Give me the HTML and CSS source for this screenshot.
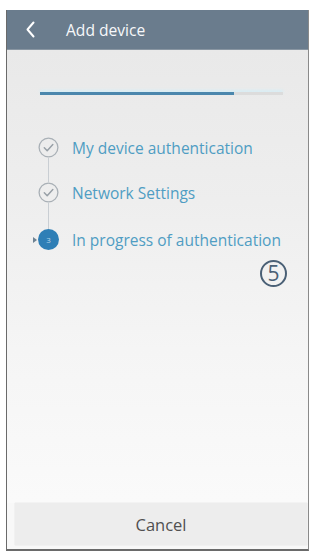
FILE: index.html
```html
<!DOCTYPE html>
<html>
<head>
<meta charset="utf-8">
<link rel="stylesheet" href="styles.css">
</head>
<body>
<div class="phone">
  <div class="header">
    <svg class="back" width="11" height="17" viewBox="0 0 11 17"><path d="M8.5 1.5 L2.5 8.5 L8.5 15.5" fill="none" stroke="#ffffff" stroke-width="2" stroke-linecap="round" stroke-linejoin="round"/></svg>
    <span class="title">Add device</span>
  </div>
  <div class="content">
    <div class="progress"><div class="fill" style="width:80%"></div></div>
    <ul class="steps">
      <li class="step done">
        <span class="marker"></span>
        <span class="circle"><svg width="21" height="21" viewBox="0 0 21 21"><circle cx="10.5" cy="10.5" r="9.4" fill="none" stroke="#a9b0b6" stroke-width="1.3"/><path d="M6.3 10.8 L9.2 13.7 L14.8 7.6" fill="none" stroke="#98a0a7" stroke-width="1.5" stroke-linecap="round" stroke-linejoin="round"/></svg></span>
        <span class="label">My device authentication</span>
      </li>
      <li class="step done">
        <span class="marker"></span>
        <span class="circle"><svg width="21" height="21" viewBox="0 0 21 21"><circle cx="10.5" cy="10.5" r="9.4" fill="none" stroke="#a9b0b6" stroke-width="1.3"/><path d="M6.3 10.8 L9.2 13.7 L14.8 7.6" fill="none" stroke="#98a0a7" stroke-width="1.5" stroke-linecap="round" stroke-linejoin="round"/></svg></span>
        <span class="label">Network Settings</span>
      </li>
      <li class="step current">
        <span class="marker"></span>
        <span class="circle num">3</span>
        <span class="label">In progress of authentication</span>
      </li>
    </ul>
    <div class="stepno">5</div>
  </div>
  <div class="footer">
    <button class="cancel">Cancel</button>
  </div>
</div>
</body>
</html>
```
FILE: styles.css
```css
html, body {
  margin: 0;
  padding: 0;
  background: #ffffff;
}
body {
  font-family: "Open Sans", "Liberation Sans", sans-serif;
}
.phone {
  margin: 10px 0 0 6px;
  width: 301px;
  height: 539px;
  border-left: 1px solid #6a6a6a;
  border-right: 1px solid #8a8a8a;
  border-bottom: 2px solid #6a6a6a;
  display: flex;
  flex-direction: column;
  background: #f8f8f8;
}
.header {
  height: 39px;
  background: #6a7c8d;
  display: flex;
  align-items: center;
  border-bottom: 1px solid #8996a2;
}
.back {
  margin-left: 18px;
}
.title {
  margin-left: 30px;
  color: #f7f8fa;
  font-size: 15.6px;
}
.content {
  flex: 1;
  background: linear-gradient(#e9e9e9 0px, #eeeeee 150px, #f5f5f5 300px, #fafafa 450px);
  display: flex;
  flex-direction: column;
}
.progress {
  margin: 42px 25px 0 33px;
  height: 3px;
  background: #dcdcdc;
  box-shadow: 0 -2px 3px #d6edf5;
}
.fill {
  height: 100%;
  background: #4b87ad;
}
.steps {
  list-style: none;
  margin: 42px 0 0 0;
  padding: 0;
  display: flex;
  flex-direction: column;
  gap: 24px;
}
.step {
  display: flex;
  align-items: center;
  height: 21px;
  position: relative;
}
.step.current {
  margin-top: 2px;
}
.step + .step::before {
  content: "";
  position: absolute;
  left: 41px;
  top: -24px;
  width: 1px;
  height: 24px;
  background: #c9ced3;
}
.step.current::before {
  top: -26px;
  height: 26px;
}
.marker {
  width: 31px;
  display: flex;
  justify-content: flex-end;
}
.current .marker::after {
  content: "";
  border-left: 4px solid #6d8293;
  border-top: 3px solid transparent;
  border-bottom: 3px solid transparent;
  margin-right: 1px;
}
.circle {
  width: 21px;
  height: 21px;
  display: flex;
}
.num {
  border-radius: 50%;
  background: #2f7fb6;
  color: #b9d6ea;
  font-size: 8px;
  align-items: center;
  justify-content: center;
}
.label {
  margin-left: 13px;
  color: #4f9dc3;
  font-size: 15.5px;
  white-space: nowrap;
}
.stepno {
  align-self: flex-end;
  margin: 10px 21px 0 0;
  width: 23px;
  height: 23px;
  border: 2px solid #4a6076;
  border-radius: 50%;
  color: #4a6076;
  font-size: 21px;
  line-height: 23px;
  text-align: center;
}
.footer {
  padding: 0 1px 4px 8px;
}
.cancel {
  width: 100%;
  height: 42px;
  border: none;
  background: #ededed;
  color: #505050;
  font-family: "Open Sans", "Liberation Sans", sans-serif;
  font-size: 16.5px;
  box-shadow: 0 0 1px #cfcfcf;
}
```
